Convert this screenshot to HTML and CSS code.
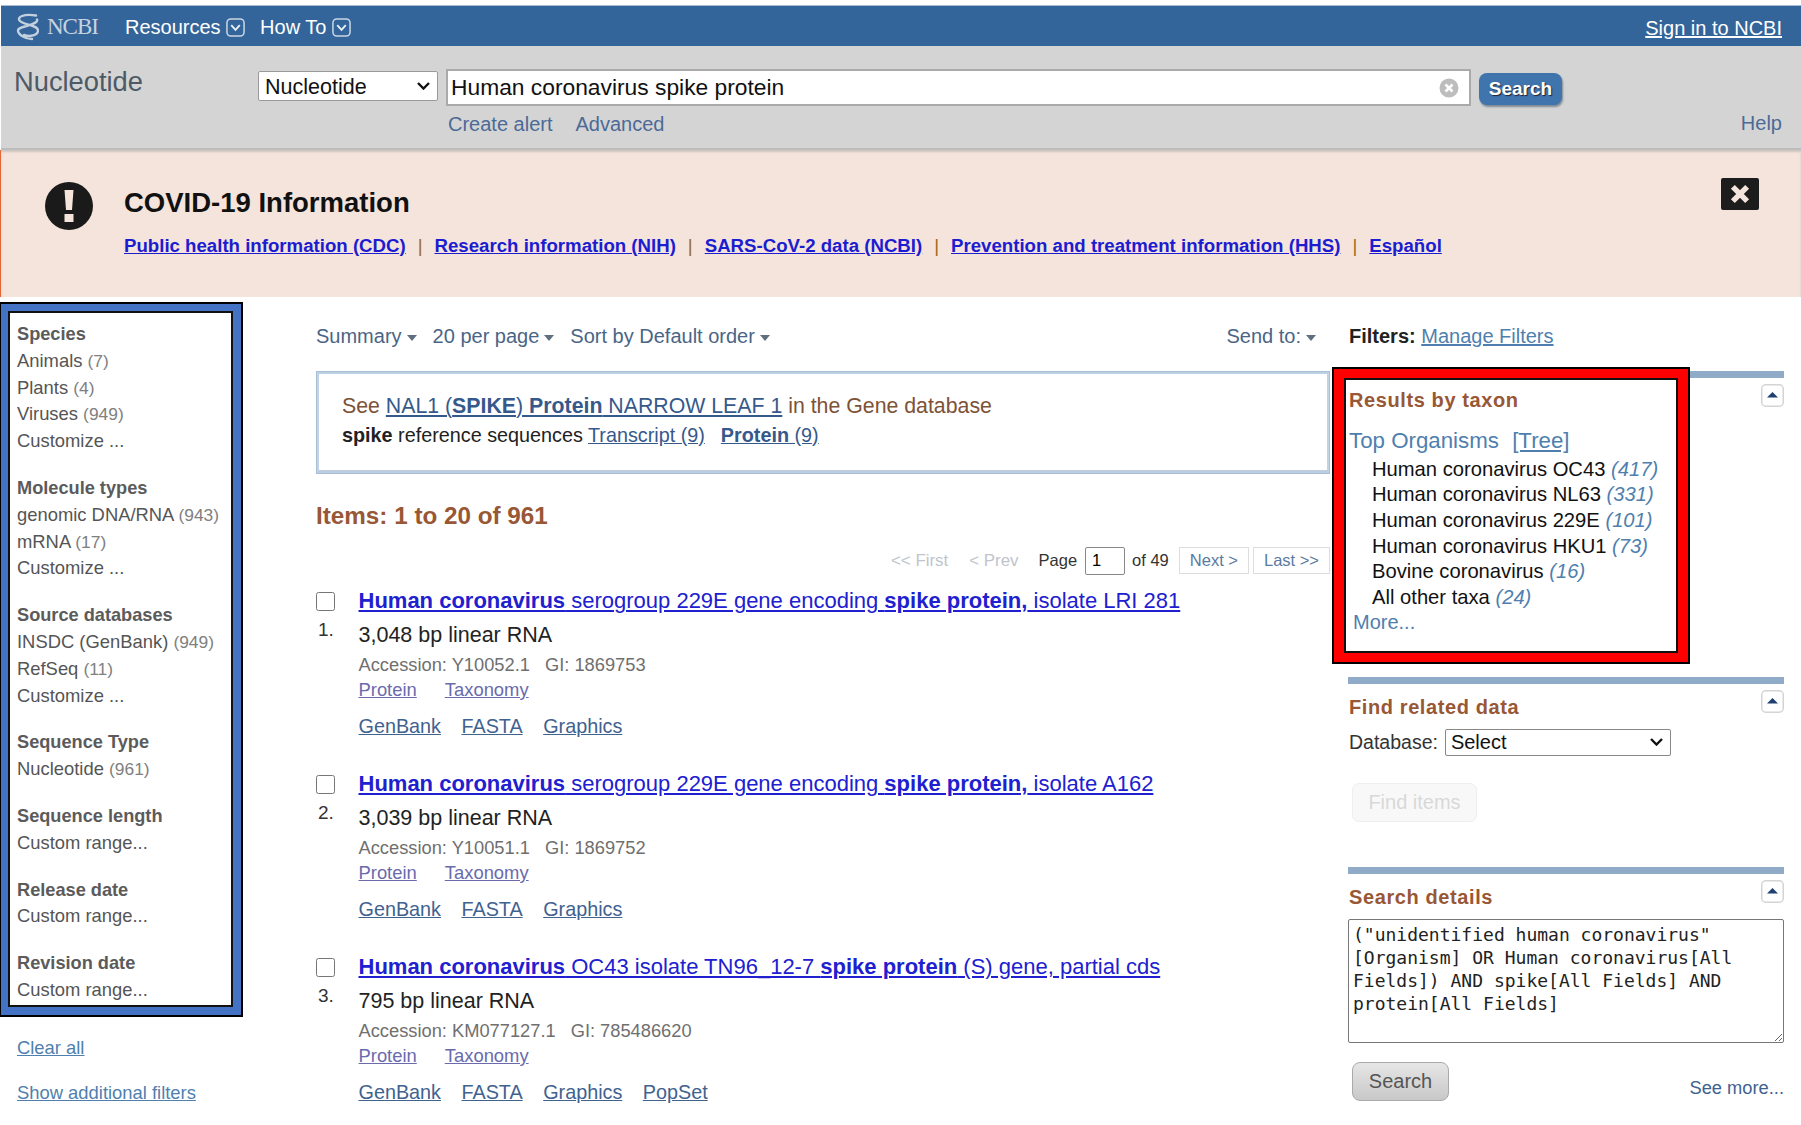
FILE: index.html
```html
<!DOCTYPE html>
<html lang="en">
<head>
<meta charset="utf-8">
<title>Human coronavirus spike protein - Nucleotide - NCBI</title>
<link rel="stylesheet" href="styles.css">
</head>
<body>
<svg class="defs" width="0" height="0" aria-hidden="true">
  <symbol id="chev" viewBox="0 0 20 20"><rect x="1" y="1" width="18" height="18" rx="4" fill="none" stroke="#c9d6e4" stroke-width="1.6"/><path d="M5.5 7.5 10 12.5l4.5-5" fill="none" stroke="#e8eef5" stroke-width="2"/></symbol>
  <symbol id="up" viewBox="0 0 23 23"><rect x=".75" y=".75" width="21.5" height="21.5" rx="4" fill="#fff" stroke="#d4d4d4" stroke-width="1.5"/><path d="M6 13.5 11.5 8l5.5 5.5z" fill="#1d3f73"/></symbol>
</svg>
<header class="ncbi-bar">
  <div class="brand">
    <svg class="helix" viewBox="0 0 24 28" width="24" height="28" aria-hidden="true"><path d="M21 2.500C9 .5 1 4 5 8c4 4 18 4 18 9.500 0 5-8 6.500-14 4.500M22 6.500c1 2.500-3 4-7 5.500-5 2-12 2-12 5.500 0 4 7 8.500 14 8.500" fill="none" stroke="#c3d0de" stroke-width="2.400" stroke-linecap="round"/></svg>
    <span class="brand-name">NCBI</span>
  </div>
  <nav class="top-nav">
    <span class="top-item">Resources<svg class="chev"><use href="#chev"/></svg></span>
    <span class="top-item">How To<svg class="chev"><use href="#chev"/></svg></span>
  </nav>
  <a class="sign-in" href="#">Sign in to NCBI</a>
</header>

<section class="search-band">
  <div class="db-title">Nucleotide</div>
  <div class="search-core">
    <div class="search-row">
      <select class="db-select"><option>Nucleotide</option></select>
      <div class="term-box">
        <input class="term-input" type="text" value="Human coronavirus spike protein">
        <svg class="clear-icon" viewBox="0 0 20 20" width="20" height="20" aria-hidden="true"><circle cx="10" cy="10" r="9.500" fill="#bdbdbd"/><path d="M6.500 6.500l7 7m0-7l-7 7" stroke="#fff" stroke-width="2.600"/></svg>
      </div>
      <button class="search-btn" type="button">Search</button>
    </div>
    <div class="search-links"><a href="#">Create alert</a><a href="#">Advanced</a></div>
  </div>
  <a class="help" href="#">Help</a>
</section>

<section class="covid">
  <svg class="warn" viewBox="0 0 48 48" width="48" height="48" aria-hidden="true"><circle cx="24" cy="24" r="24" fill="#1a1a1a"/><path d="M19.500 8h9l-1.500 20h-6z" fill="#f4e4dc"/><rect x="19.500" y="32" width="9" height="8" fill="#f4e4dc"/></svg>
  <div class="covid-body">
    <h2 class="covid-title">COVID-19 Information</h2>
    <p class="covid-links"><a href="#">Public health information (CDC)</a><span class="sep">|</span><a href="#">Research information (NIH)</a><span class="sep">|</span><a href="#">SARS-CoV-2 data (NCBI)</a><span class="sep">|</span><a href="#">Prevention and treatment information (HHS)</a><span class="sep">|</span><a href="#">Español</a></p>
  </div>
  <div class="covid-close"><svg viewBox="0 0 20 20" width="22" height="22" aria-hidden="true"><path d="M3.500 3.500l13 13m0-13l-13 13" stroke="#f4e4dc" stroke-width="5"/></svg></div>
</section>

<main class="content">
  <aside class="left-col">
    <div class="blue-frame">
      <div class="facets">
        <div class="facet"><h4>Species</h4><div>Animals <i>(7)</i></div><div>Plants <i>(4)</i></div><div>Viruses <i>(949)</i></div><div>Customize ...</div></div>
        <div class="facet"><h4>Molecule types</h4><div>genomic DNA/RNA <i>(943)</i></div><div>mRNA <i>(17)</i></div><div>Customize ...</div></div>
        <div class="facet"><h4>Source databases</h4><div>INSDC (GenBank) <i>(949)</i></div><div>RefSeq <i>(11)</i></div><div>Customize ...</div></div>
        <div class="facet"><h4>Sequence Type</h4><div>Nucleotide <i>(961)</i></div></div>
        <div class="facet"><h4>Sequence length</h4><div>Custom range...</div></div>
        <div class="facet"><h4>Release date</h4><div>Custom range...</div></div>
        <div class="facet"><h4>Revision date</h4><div>Custom range...</div></div>
      </div>
    </div>
    <a class="left-link first" href="#">Clear all</a>
    <a class="left-link" href="#">Show additional filters</a>
  </aside>

  <section class="center-col">
    <div class="toolbar">
      <span class="tool">Summary<b class="caret"></b></span>
      <span class="tool">20 per page<b class="caret"></b></span>
      <span class="tool">Sort by Default order<b class="caret"></b></span>
      <span class="tool send">Send to:<b class="caret"></b></span>
    </div>
    <div class="sensor">
      <div class="sensor-line brown">See <a href="#">NAL1 (<b>SPIKE</b>) <b>Protein</b> NARROW LEAF 1</a> in the Gene database</div>
      <div class="sensor-line second"><b>spike</b> reference sequences <a href="#">Transcript (9)</a><a class="gap" href="#"><b>Protein</b> (9)</a></div>
    </div>
    <h3 class="items-count">Items: 1 to 20 of 961</h3>
    <div class="pager">
      <span class="pg-off">&lt;&lt; First</span>
      <span class="pg-off">&lt; Prev</span>
      <span class="pg-label">Page</span>
      <input class="pg-input" type="text" value="1">
      <span class="pg-of">of 49</span>
      <a class="pg-btn next" href="#">Next &gt;</a>
      <a class="pg-btn last" href="#">Last &gt;&gt;</a>
    </div>

    <article class="item">
      <div class="item-side"><input type="checkbox" class="item-check"><span class="item-num">1.</span></div>
      <div class="item-main">
        <a class="item-title" href="#"><b>Human coronavirus</b> serogroup 229E gene encoding <b>spike protein,</b> isolate LRI 281</a>
        <div class="item-size">3,048 bp linear RNA</div>
        <div class="item-acc"><span>Accession: Y10052.1</span><span>GI: 1869753</span></div>
        <div class="item-rel"><a href="#">Protein</a><a href="#">Taxonomy</a></div>
        <div class="item-fmt"><a href="#">GenBank</a><a href="#">FASTA</a><a href="#">Graphics</a></div>
      </div>
    </article>
    <article class="item">
      <div class="item-side"><input type="checkbox" class="item-check"><span class="item-num">2.</span></div>
      <div class="item-main">
        <a class="item-title" href="#"><b>Human coronavirus</b> serogroup 229E gene encoding <b>spike protein,</b> isolate A162</a>
        <div class="item-size">3,039 bp linear RNA</div>
        <div class="item-acc"><span>Accession: Y10051.1</span><span>GI: 1869752</span></div>
        <div class="item-rel"><a href="#">Protein</a><a href="#">Taxonomy</a></div>
        <div class="item-fmt"><a href="#">GenBank</a><a href="#">FASTA</a><a href="#">Graphics</a></div>
      </div>
    </article>
    <article class="item">
      <div class="item-side"><input type="checkbox" class="item-check"><span class="item-num">3.</span></div>
      <div class="item-main">
        <a class="item-title" href="#"><b>Human coronavirus</b> OC43 isolate TN96_12-7 <b>spike protein</b> (S) gene, partial cds</a>
        <div class="item-size">795 bp linear RNA</div>
        <div class="item-acc"><span>Accession: KM077127.1</span><span>GI: 785486620</span></div>
        <div class="item-rel"><a href="#">Protein</a><a href="#">Taxonomy</a></div>
        <div class="item-fmt"><a href="#">GenBank</a><a href="#">FASTA</a><a href="#">Graphics</a><a href="#">PopSet</a></div>
      </div>
    </article>
  </section>

  <aside class="right-col">
    <div class="filters-row"><b>Filters:</b> <a href="#">Manage Filters</a></div>
    <section class="panel first-panel">
      <div class="panel-line"></div>
      <svg class="collapse"><use href="#up"/></svg>
      <div class="red-frame">
        <div class="taxon-box">
          <h4 class="panel-title taxon-title">Results by taxon</h4>
          <div class="top-org">Top Organisms <a href="#">[Tree]</a></div>
          <ul class="taxa">
            <li>Human coronavirus OC43 <i>(417)</i></li>
            <li>Human coronavirus NL63 <i>(331)</i></li>
            <li>Human coronavirus 229E <i>(101)</i></li>
            <li>Human coronavirus HKU1 <i>(73)</i></li>
            <li>Bovine coronavirus <i>(16)</i></li>
            <li>All other taxa <i>(24)</i></li>
          </ul>
          <a class="more" href="#">More...</a>
        </div>
      </div>
    </section>
    <section class="panel">
      <div class="panel-line"></div>
      <svg class="collapse"><use href="#up"/></svg>
      <h4 class="panel-title">Find related data</h4>
      <label class="db-row">Database: <select class="rel-select"><option>Select</option></select></label>
      <button class="find-btn" type="button">Find items</button>
    </section>
    <section class="panel details">
      <div class="panel-line"></div>
      <svg class="collapse"><use href="#up"/></svg>
      <h4 class="panel-title">Search details</h4>
      <textarea class="query" spellcheck="false">("unidentified human coronavirus"[Organism] OR Human coronavirus[All Fields]) AND spike[All Fields] AND protein[All Fields]</textarea>
      <div class="details-foot"><button class="gray-btn" type="button">Search</button><a class="see-more" href="#">See more...</a></div>
    </section>
  </aside>
</main>
</body>
</html>
```
FILE: styles.css
```css
* { box-sizing: border-box; }
html, body { margin: 0; height: 100%; }
body { height: 1125px; overflow: hidden; background: #fff; font-family: "Liberation Sans", Arial, sans-serif; font-size: 20px; color: #222; }
.defs { position: absolute; }
a { color: inherit; }

.ncbi-bar { height: 41px; margin: 5px 0 0 1px; padding: 2px 19px 0 14px; background: #34659a; border-top: 1px solid #a9bdd2; color: #fff; display: flex; align-items: center; }
.brand { display: flex; align-items: center; width: 110px; }
.helix { flex: none; }
.brand-name { margin-left: 8px; font-family: "Liberation Serif", serif; font-size: 23px; letter-spacing: -1px; color: #c7d3e0; }
.top-nav { display: flex; gap: 15px; }
.top-item { display: flex; align-items: center; gap: 5.500px; }
.chev { width: 19px; height: 21px; }
.sign-in { margin: 2px 0 0 auto; }

.search-band { height: 104px; margin-left: 1px; padding: 0 19px 0 13px; background: #d4d4d4; border-bottom: 2px solid #bdbdbd; position: relative; display: flex; }
.db-title { width: 244px; flex: none; padding-top: 20px; font-size: 27.300px; line-height: 32px; color: #4d5a66; }
.search-core { width: 1320px; flex: none; padding-top: 23px; }
.search-row { display: flex; align-items: flex-start; }
.db-select { flex: none; width: 180px; height: 30px; margin-top: 2px; padding: 1px 0 0 6px; border: 1px solid #9a9a9a; border-radius: 2px; appearance: none; background: #fff url("data:image/svg+xml,%3Csvg xmlns='http://www.w3.org/2000/svg' width='13' height='8'%3E%3Cpath d='M1 1l5.500 5.500L12 1' fill='none' stroke='%23111' stroke-width='2.400'/%3E%3C/svg%3E") no-repeat right 7px center; font: 21.500px "Liberation Sans", sans-serif; color: #111; }
.term-box { flex: none; width: 1025px; height: 37px; margin-left: 8px; padding-right: 10px; border: 2px solid #aaa; background: #fff; display: flex; align-items: center; }
.term-input { flex: 1; min-width: 0; padding: 0 3px; border: 0; outline: 0; background: transparent; font: 22.800px "Liberation Sans", sans-serif; color: #111; }
.search-btn { flex: none; width: 83px; height: 32px; margin: 4px 0 0 8px; padding: 0; border: 0; border-radius: 8px; background: #3f74ad; box-shadow: 1px 2px 2px #7f8a96; font: bold 19px "Liberation Sans", sans-serif; color: #fff; text-shadow: 1px 1px 1px #223; }
.search-links { display: flex; gap: 23px; padding-left: 190px; margin-top: 5px; line-height: 26px; color: #4c6a96; }
.search-links a, .help { text-decoration: none; }
.help { position: absolute; right: 19px; top: 64px; line-height: 26px; color: #4c6a96; }

.covid { height: 147px; background: #f4e4dc; border-left: 1px solid #e06a3a; box-shadow: inset 0 2px 2px #cfc6c0; position: relative; display: flex; }
.warn { flex: none; margin: 32px 0 0 44px; }
.covid-body { padding: 35px 0 0 31px; }
.covid-title { margin: 0; font-size: 27.500px; line-height: 36px; font-weight: bold; color: #111; }
.covid-links { margin: 12px 0 0; font-size: 18.650px; line-height: 26px; font-weight: bold; color: #1c1cd0; }
.sep { margin: 0 12px; font-weight: normal; color: #9a6a20; }
.covid-close { position: absolute; left: 1720px; top: 28px; width: 38px; height: 32px; border-radius: 2px; background: #1c1c1c; display: flex; align-items: center; justify-content: center; }

.content { display: flex; align-items: flex-start; }
.left-col { width: 243px; padding-top: 5px; flex: none; }
.blue-frame { height: 715px; border: 2px solid #000; border-left-width: 1px; padding: 7px 8px 8px 7px; background: #4472c4; }
.facets { height: 696px; border: 2px solid #111; background: #fff; padding: 8px 0 0 7px; font-size: 18.400px; line-height: 26.800px; color: #555; white-space: nowrap; }
.facet { margin-bottom: 20px; }
.facet h4 { margin: 0; font-size: 18.200px; font-weight: bold; color: #5b5b5b; }
.facet i { font-style: normal; font-size: 17.400px; line-height: 1; color: #808080; }
.left-link { display: block; margin: 18px 0 0 17px; font-size: 18.400px; line-height: 27px; color: #4f7fae; }
.left-link.first { margin-top: 17px; }

.center-col { width: 1014px; margin-left: 73px; flex: none; }
.toolbar { height: 52px; padding-top: 26px; display: flex; align-items: center; gap: 16px; line-height: 26px; color: #4a6585; }
.tool { display: inline-flex; align-items: center; }
.send { margin-left: auto; margin-right: 14px; }
.caret { width: 0; height: 0; margin: 4px 0 0 5px; border: 5px solid transparent; border-top: 6px solid #5f6f80; border-bottom: 0; }
.sensor { height: 103px; margin-top: 22px; padding: 18px 0 0 23px; border: 3px solid #c3d3e3; border-top-color: #bcd0e2; border-bottom: 4px solid #bccde0; outline: 1px solid #a8bfd6; outline-offset: -1px; line-height: 29px; color: #222; }
.sensor-line { font-size: 21.300px; }
.sensor-line.second { font-size: 19.800px; }
.sensor-line a { color: #36598c; }
.brown { color: #7d5236; }
.gap { margin-left: 16px; }
.items-count { margin: 27px 0 0; font-size: 24.250px; line-height: 30px; font-weight: bold; color: #985735; }
.pager { height: 29px; margin-top: 15px; margin-bottom: -1px; display: flex; justify-content: flex-end; align-items: center; font-size: 16.500px; color: #333; }
.pg-off { margin-right: 21px; font-size: 16.900px; color: #c0c4cc; }
.pg-off + .pg-off { margin-right: 20px; }
.pg-label { margin-right: 8px; }
.pg-input { width: 40px; height: 28px; padding: 0 6px; border: 1px solid #888; border-radius: 2px; font: 16.500px "Liberation Sans", sans-serif; }
.pg-of { margin: 0 10px 0 7px; }
.pg-btn { height: 27px; padding: 0 10px; border: 1px solid #ddd; line-height: 25px; text-decoration: none; color: #5a7ba0; }
.pg-btn.next { margin-right: 4px; }

.item { height: 183px; display: flex; }
.pager + .item { margin-top: 12px; }
.item-side { width: 42.500px; flex: none; display: flex; flex-direction: column; }
.item-check { width: 19px; height: 19px; margin: 6px 0 0; }
.item-num { margin: 7px 0 0 2px; font-size: 19px; line-height: 24px; color: #333; }
.item-main { flex: 1; min-width: 0; }
.item-title { display: block; font-size: 22px; line-height: 30px; color: #2020d0; white-space: nowrap; }
.item-size { margin-top: 4px; font-size: 21.500px; line-height: 30px; color: #222; }
.item-acc { margin-top: 2px; font-size: 18.300px; line-height: 26px; color: #6f6f6f; display: flex; gap: 15px; }
.item-rel { margin-top: -1px; font-size: 18.400px; line-height: 26px; color: #6a6aad; display: flex; gap: 28px; }
.item-fmt { margin-top: 9px; font-size: 19.800px; line-height: 28px; color: #3f628f; display: flex; gap: 20.500px; }

.right-col { width: 436px; margin-left: 18px; flex: none; }
.filters-row { height: 52px; padding: 26px 0 0 1px; line-height: 26px; color: #333; }
.filters-row b { color: #222; }
.filters-row a { color: #4f7fae; }
.panel { position: relative; }
.first-panel { margin-top: 22px; }
.panel-line { height: 7px; background: #8fabc8; }
.collapse { position: absolute; right: 0; top: 13px; width: 23px; height: 23px; }
.red-frame { position: relative; width: 358px; height: 297px; margin: -11px 0 13px -16px; border: 2px solid #000; padding: 9px 10px 11px; background: #f00; }
.taxon-box { height: 275px; border: 2px solid #111; background: #fff; padding: 5px 0 0 3px; }
.panel-title { margin: 0; font-size: 20px; line-height: 30px; font-weight: bold; letter-spacing: .6px; color: #985735; }
.top-org { margin-top: 11px; font-size: 22.300px; line-height: 30px; color: #4f7fae; }
.top-org a { margin-left: 7px; }
.taxa { margin: .5px 0 0; padding: 0 0 0 23px; list-style: none; font-size: 20.200px; line-height: 25.700px; color: #111; }
.taxa i { color: #4f7fae; }
.more { display: block; margin: -1.500px 0 0 4px; font-size: 20px; line-height: 26px; text-decoration: none; color: #4f7fae; }
.panel > .panel-title { margin: 8px 0 0 1px; }
.db-row { display: flex; align-items: center; gap: 7px; margin: 6px 0 0 1px; height: 28px; font-size: 19.500px; line-height: 28px; color: #333; }
.rel-select { width: 226px; height: 27px; padding-left: 5px; border: 1px solid #888; border-radius: 2px; appearance: none; background: #fff url("data:image/svg+xml,%3Csvg xmlns='http://www.w3.org/2000/svg' width='13' height='8'%3E%3Cpath d='M1 1l5.500 5.500L12 1' fill='none' stroke='%23111' stroke-width='2.400'/%3E%3C/svg%3E") no-repeat right 7px center; font: 20px "Liberation Sans", sans-serif; color: #111; }
.find-btn { display: block; width: 125px; height: 39px; margin: 27px 0 45px 4px; padding: 0; border: 1px solid #eee; border-radius: 7px; background: #f8f8f8; font: 20px "Liberation Sans", sans-serif; color: #d8d8d8; }
.query { display: block; width: 436px; height: 124px; margin-top: 7px; padding: 3px 4px; border: 1px solid #777; border-radius: 2px; font: 18px/23px "DejaVu Sans Mono", monospace; color: #222; outline: 0; resize: both; }
.details-foot { display: flex; align-items: flex-end; justify-content: space-between; margin-top: 19px; padding-left: 4px; }
.gray-btn { width: 97px; height: 39px; padding: 0; border: 1px solid #aaa; border-radius: 8px; background: linear-gradient(#e6e6e6, #c8c8c8); font: 20px "Liberation Sans", sans-serif; color: #555; }
.see-more { font-size: 18.300px; line-height: 26px; text-decoration: none; color: #3f628f; }
```
